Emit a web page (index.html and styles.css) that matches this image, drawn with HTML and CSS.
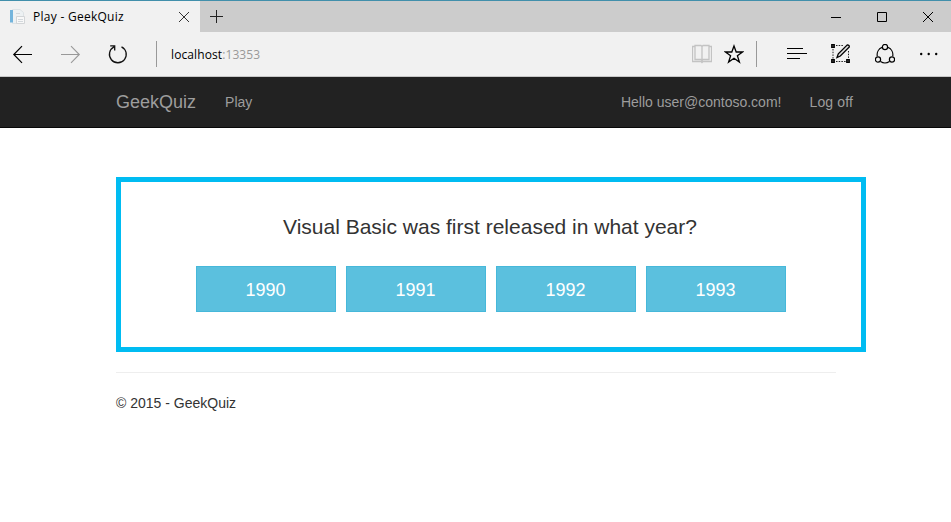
FILE: index.html
```html
<!DOCTYPE html>
<html lang="en">
<head>
<meta charset="utf-8">
<title>Play - GeekQuiz</title>
<link rel="stylesheet" href="styles.css">
</head>
<body>
<header class="browser">
  <div class="titlebar">
    <div class="tab">
      <svg class="favicon" width="16" height="16" viewBox="0 0 16 16">
        <path d="M3.500 .5h7.500l3.500 3v11h-11z" fill="#edf1f3" stroke="#dde2e5"/>
        <path d="M1 1h3v12.500h-3z" fill="#73b4dc"/>
        <path d="M7.500 7.500h8v7h-8z" fill="#f8f8f8" stroke="#d2d5d7"/>
        <path d="M9 10.500h5M9 12.500h5M7 4.500h4" stroke="#d3d8dc"/>
      </svg>
      <span class="tab-title">Play - GeekQuiz</span>
      <svg class="tab-close" width="12" height="12" viewBox="0 0 12 12"><path d="M1 1l10 10M11 1L1 11" stroke="#333" fill="none"/></svg>
    </div>
    <svg class="new-tab" width="13" height="13" viewBox="0 0 13 13"><path d="M0 6.500h13M6.500 0v13" stroke="#222" fill="none"/></svg>
    <div class="window-controls">
      <svg width="12" height="12" viewBox="0 0 12 12"><path d="M1 6.500h10" stroke="#000"/></svg>
      <svg width="12" height="12" viewBox="0 0 12 12"><path d="M1.500 1.500h9v9h-9z" stroke="#000" fill="none"/></svg>
      <svg width="12" height="12" viewBox="0 0 12 12"><path d="M1 1l10 10M11 1L1 11" stroke="#000" fill="none"/></svg>
    </div>
  </div>
  <div class="toolbar">
    <svg class="back" width="20" height="20" viewBox="0 0 20 20"><path d="M20 10.500H1.800M10 2.200L1.800 10.500L10 18.800" stroke="#000" stroke-width="1.200" fill="none"/></svg>
    <svg class="forward" width="20" height="20" viewBox="0 0 20 20"><path d="M0 10.500H18.300M10 2.200L18.300 10.500L10 18.800" stroke="#999" stroke-width="1.100" fill="none"/></svg>
    <svg class="reload" width="20" height="20" viewBox="0 0 20 20"><path d="M13.500 2.800A8.400 8.400 0 1 1 6 2.900M2.200 1.800H6.700V6.500" stroke="#111" stroke-width="1.300" fill="none"/></svg>
    <span class="divider"></span>
    <span class="address">localhost<span class="port">:13353</span></span>
    <svg class="book" width="20" height="20" viewBox="0 0 20 20"><path d="M3 2.500H.5v15H9l1 1l1-1h8.500v-15H17M3 1.500h6l1 1l1-1h6v14h-6l-1 1l-1-1H3zM10 2v15" stroke="#c3c3c3" stroke-width="1.300" fill="none"/></svg>
    <svg class="star" width="20" height="20" viewBox="0 0 20 20"><path d="M10 2l2.200 6h6.300l-5.100 3.800l2 6.200L10 14.200L4.600 18l2-6.200L1.500 8h6.300z" stroke="#000" stroke-width="1.300" fill="none"/></svg>
    <span class="divider"></span>
    <svg class="hub" width="20" height="20" viewBox="0 0 20 20"><path d="M0 4.500h16M0 9.500h20M0 14.500h13" stroke="#000" stroke-width="1.200"/></svg>
    <svg class="note" width="20" height="20" viewBox="0 0 20 20"><path d="M5 1.500h7M2 5v11M5 17.500h10M17.500 7v9" stroke="#222" stroke-dasharray="1.500 1.200" fill="none"/><path d="M.8 .8h2.400v2.400h-2.400zM.8 15.800h2.400v2.400h-2.400zM15.800 15.800h2.400v2.400h-2.400z" fill="#888" stroke="#000" stroke-width="1.400"/><path d="M6 13.500l1.300-3.700L16.300 .9q2.200 .1 2 2l-9 9.100z" fill="#ddd" stroke="#000" stroke-width="1.300"/></svg>
    <svg class="share" width="20" height="20" viewBox="0 0 20 20"><g stroke="#000" stroke-width="1.200" fill="none"><path d="M7 3.400A8 8 0 0 0 2.300 12.300M13 3.400A8 8 0 0 1 17.700 12.300M5.500 17.600a8.500 8.500 0 0 0 9 0"/><circle cx="10" cy="3" r="2.600"/><circle cx="3" cy="15.500" r="2.600"/><circle cx="17" cy="15.500" r="2.600"/></g></svg>
    <svg class="more" width="20" height="20" viewBox="0 0 20 20"><circle cx="2.200" cy="10" r="1.200"/><circle cx="9.700" cy="10" r="1.200"/><circle cx="17.200" cy="10" r="1.200"/></svg>
  </div>
</header>
<nav class="navbar">
  <a class="brand">GeekQuiz</a>
  <a class="play">Play</a>
  <a class="user">Hello user@contoso.com!</a>
  <a class="logoff">Log off</a>
</nav>
<main class="container">
  <section class="quiz">
    <p class="question">Visual Basic was first released in what year?</p>
    <div class="options">
      <button class="option">1990</button>
      <button class="option">1991</button>
      <button class="option">1992</button>
      <button class="option">1993</button>
    </div>
  </section>
  <hr class="rule">
  <footer class="footer">© 2015 - GeekQuiz</footer>
</main>
</body>
</html>
```
FILE: styles.css
```css
* { box-sizing: border-box; }
body {
  margin: 0;
  height: 522px;
  overflow: hidden;
  background: #fff;
  color: #333;
  font: 14px/20px "Liberation Sans", Arial, sans-serif;
}
svg { display: block; flex: none; }
.browser {
  height: 77px;
  border-top: 1px solid #418fab;
  border-bottom: 1px solid #c8c8c8;
  background: #f1f1f1;
  color: #000;
  font: 12px/16px "Open Sans", "Noto Sans", sans-serif;
}
.titlebar { display: flex; align-items: center; height: 31px; background: #ccc; }
.tab {
  display: flex;
  align-items: center;
  width: 200px;
  height: 31px;
  padding: 0 10px 0 9px;
  background: #f1f1f1;
}
.tab-title { margin-left: 8px; letter-spacing: 0.27px; white-space: nowrap; }
.tab-close { margin-left: auto; }
.new-tab { margin-left: 10px; }
.window-controls { display: flex; gap: 34px; margin-left: auto; margin-right: 17px; }
.toolbar { display: flex; align-items: center; height: 44px; padding: 0 12px; }
.forward { margin-left: 29px; }
.reload { margin-left: 27px; }
.divider { width: 1px; height: 26px; background: #999; }
.reload + .divider { margin-left: 28px; }
.address { width: 521px; margin-left: 14px; padding-top: 2px; letter-spacing: 0.1px; }
.port { color: #999; }
.star { margin-left: 12px; }
.star + .divider { margin-left: 12px; }
.hub { margin-left: 30px; }
.note { margin-left: 24px; }
.share { margin-left: 24px; }
.more { margin-left: 24px; }
.navbar {
  display: flex;
  align-items: center;
  height: 51px;
  padding: 0 98px 0 116px;
  border-bottom: 1px solid #080808;
  background: #222;
  color: #9d9d9d;
}
.brand { font-size: 18px; }
.play { margin-left: 29px; }
.user { margin-left: auto; }
.logoff { margin-left: 28px; letter-spacing: 0.14px; }
.container { width: 750px; margin: 49px 0 0 116px; }
.quiz { height: 175px; padding-top: 30px; border: 5px solid #00bcf2; text-align: center; }
.question { margin: 0 1px 0 -1px; font-size: 21px; line-height: 30px; }
.options { display: flex; justify-content: center; gap: 10px; margin-top: 24px; }
.option {
  width: 140px;
  height: 46px;
  padding: 2px 1px 0 0;
  border: 1px solid #46b8da;
  background: #5bc0de;
  color: #fff;
  font: 18px/24px "Liberation Sans", Arial, sans-serif;
}
.rule { width: 720px; margin: 20px 0; border: 0; border-top: 1px solid #eee; }
.footer { margin-left: 0; }
```
